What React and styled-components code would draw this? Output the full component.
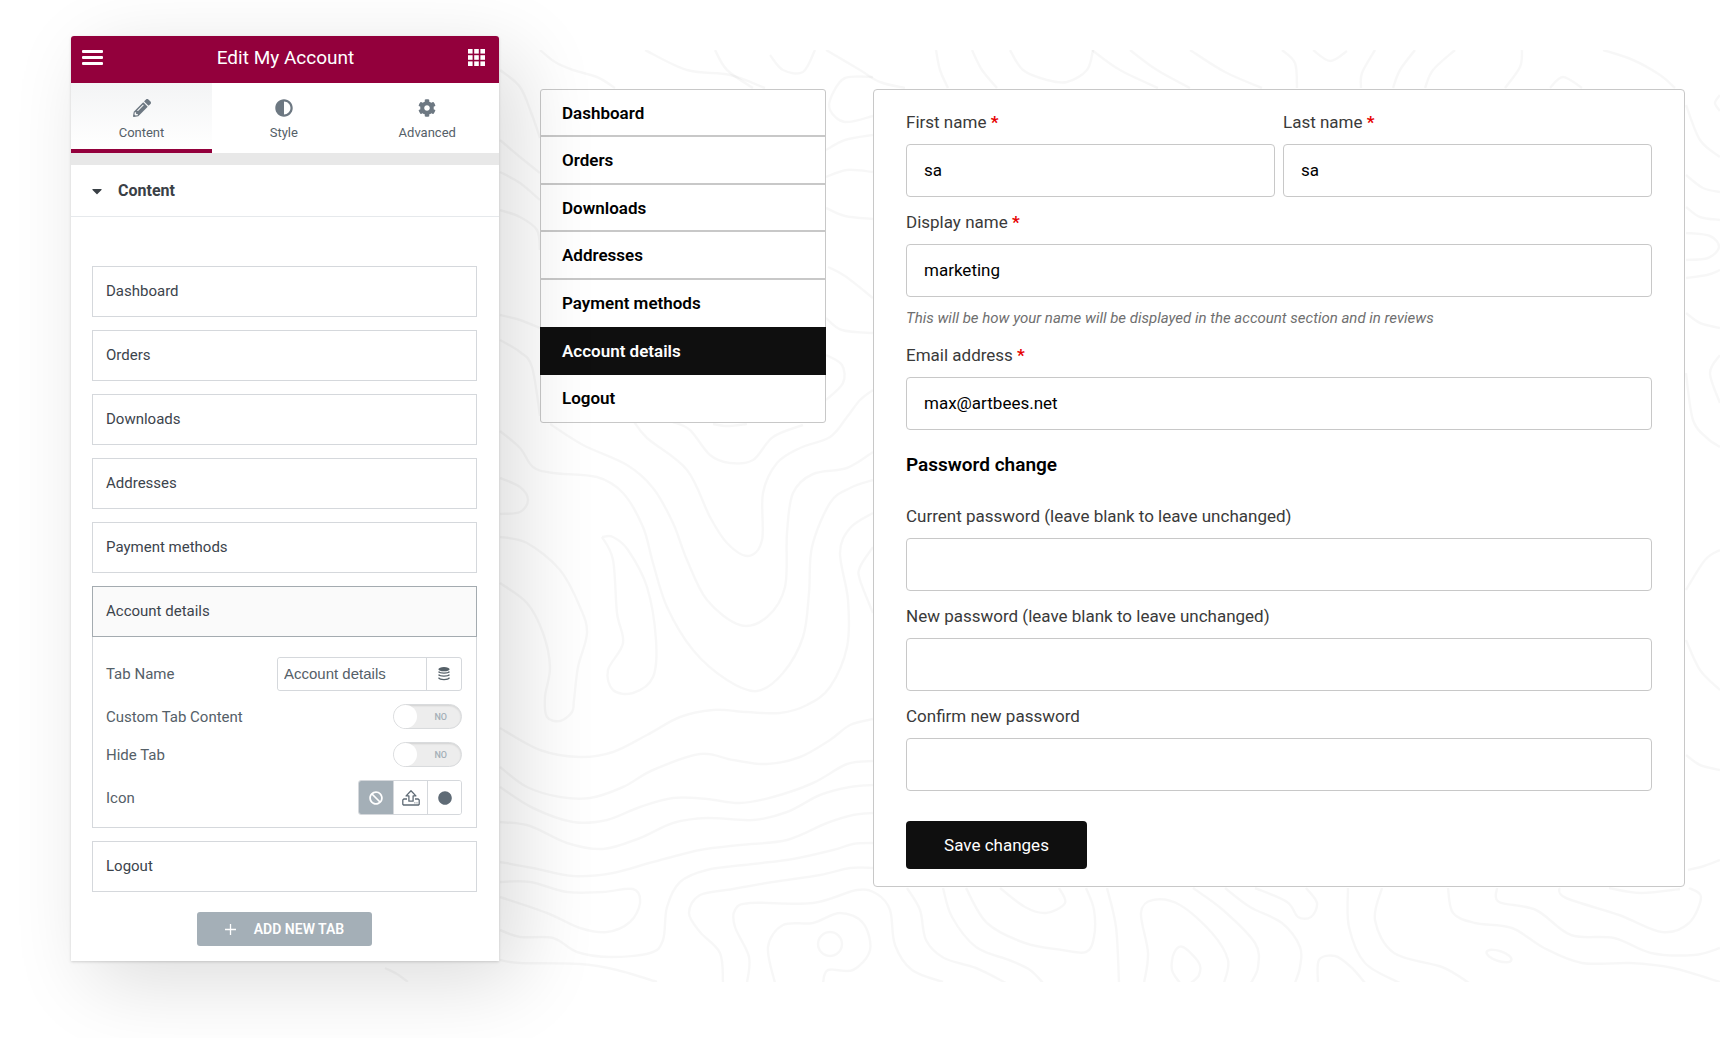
import React, { useState } from "react";
import styled, { createGlobalStyle } from "styled-components";
import {
  FaPencilAlt,
  FaAdjust,
  FaCog,
  FaCaretDown,
  FaBan,
  FaCircle,
} from "react-icons/fa";

const tabs = [
  { id: "content", label: "Content", icon: <FaPencilAlt /> },
  { id: "style", label: "Style", icon: <FaAdjust /> },
  { id: "advanced", label: "Advanced", icon: <FaCog /> },
];

const accountTabs = [
  "Dashboard",
  "Orders",
  "Downloads",
  "Addresses",
  "Payment methods",
  "Account details",
  "Logout",
];

// Contour lines of the backdrop, as flat x,y lists
const contours = [
  [385, 968, 397, 974, 408, 982],
  [550, 424, 583, 445, 627, 465, 653, 488, 673, 523, 687, 560, 707, 600, 740, 625, 767, 617, 785, 587, 787, 533, 793, 493, 813, 474, 847, 468, 873, 452],
  [500, 431, 520, 448, 533, 467, 553, 473, 597, 477, 623, 493, 643, 527, 653, 563, 667, 607, 693, 650, 727, 680, 757, 691, 783, 673, 803, 637, 809, 593, 812, 547, 830, 503, 850, 488, 873, 480],
  [633, 420, 647, 438, 687, 470, 710, 517, 727, 543, 748, 556, 762, 540, 763, 493, 777, 463, 800, 448, 830, 437, 847, 417, 860, 400, 873, 390],
  [673, 422, 690, 430, 710, 455, 730, 463, 753, 460, 773, 437, 803, 425],
  [713, 424, 727, 426, 747, 424],
  [602, 537, 613, 560, 617, 613, 623, 643, 608, 670, 613, 690, 633, 693, 653, 677, 656, 640, 647, 587, 628, 550, 613, 537, 602, 537],
  [500, 537, 527, 543, 560, 570, 580, 607, 587, 633, 578, 667, 574, 700, 572, 712, 560, 721, 547, 717, 545, 697, 550, 667, 543, 633, 527, 603, 500, 583],
  [500, 478, 520, 487, 528, 500, 520, 512, 500, 514],
  [873, 513, 850, 528, 840, 553, 848, 600, 847, 647, 830, 687, 807, 705, 780, 713, 747, 712, 713, 710, 680, 717, 647, 735, 613, 752, 580, 757, 540, 750, 500, 728],
  [873, 547, 860, 567, 860, 580, 873, 613],
  [500, 767, 527, 787, 560, 797, 590, 798, 623, 787, 653, 770, 700, 754, 733, 760, 767, 764, 800, 757, 830, 740, 850, 725, 873, 719],
  [500, 787, 533, 808, 573, 822, 607, 820, 640, 807, 673, 798, 707, 799, 740, 803, 773, 797, 813, 783, 847, 764, 873, 761],
  [500, 822, 530, 826, 567, 843, 603, 849, 640, 838, 673, 823, 707, 818, 753, 820, 787, 812, 820, 795, 850, 787, 873, 785],
  [500, 862, 533, 868, 573, 876, 613, 873, 653, 862, 700, 850, 740, 845, 787, 840, 827, 823, 853, 815, 873, 813],
  [500, 882, 530, 882, 567, 892, 603, 892, 633, 889, 640, 903, 630, 922, 607, 932, 580, 928, 547, 913, 500, 897],
  [500, 930, 520, 937, 553, 938, 577, 952, 610, 957, 650, 953, 663, 940, 667, 907, 680, 882, 707, 870, 753, 864, 793, 859, 833, 850, 853, 844, 873, 843],
  [500, 960, 520, 963, 580, 964, 617, 970, 657, 982],
  [723, 983, 720, 953, 700, 932, 689, 913, 700, 895, 733, 889, 773, 882, 820, 875, 850, 868, 873, 868],
  [747, 983, 749, 957, 735, 927, 735, 910, 750, 903, 813, 903, 857, 890, 877, 894, 890, 910, 895, 945, 912, 970, 943, 982],
  [775, 983, 768, 947, 783, 925, 813, 923, 840, 913, 863, 923, 870, 950, 853, 970, 828, 970, 823, 983],
  [907, 888, 920, 910, 926, 940, 944, 958, 976, 968, 1006, 983],
  [943, 888, 952, 917, 976, 947, 1009, 960, 1030, 970, 1043, 983],
  [966, 888, 987, 923, 1025, 943, 1062, 950, 1086, 952, 1094, 937, 1094, 910, 1086, 888],
  [1000, 888, 1025, 907, 1046, 913, 1065, 903, 1059, 888],
  [1107, 888, 1116, 927, 1119, 983],
  [1144, 983, 1148, 953, 1141, 913, 1153, 900, 1180, 905, 1212, 933, 1228, 960, 1224, 983],
  [1180, 983, 1172, 970, 1174, 953, 1183, 947, 1199, 963, 1199, 975, 1191, 983],
  [1193, 888, 1223, 910, 1255, 943, 1258, 967, 1251, 983],
  [1225, 888, 1250, 907, 1282, 923, 1300, 947, 1300, 967, 1295, 983],
  [1255, 888, 1287, 902, 1298, 917, 1311, 917, 1317, 903, 1306, 888],
  [1318, 983, 1319, 960, 1335, 956, 1351, 967, 1365, 983],
  [1348, 888, 1349, 927, 1365, 963, 1400, 983],
  [1382, 888, 1375, 920, 1394, 953, 1442, 967, 1469, 983],
  [1448, 888, 1453, 913, 1475, 923, 1512, 928, 1544, 948, 1582, 963, 1630, 963, 1673, 968, 1720, 982],
  [1497, 888, 1499, 902, 1536, 910, 1571, 935, 1614, 938, 1651, 953, 1694, 955, 1720, 948],
  [1559, 888, 1566, 898, 1619, 915, 1662, 932, 1689, 923, 1701, 897, 1689, 888],
  [1609, 888, 1641, 893, 1680, 889],
  [1688, 870, 1704, 866, 1720, 860],
  [1603, 50, 1633, 60, 1660, 75, 1675, 88],
  [1686, 105, 1700, 140, 1720, 157],
  [1686, 175, 1703, 188, 1720, 192],
  [1686, 207, 1700, 217, 1720, 220],
  [1686, 233, 1710, 236, 1719, 247, 1708, 258, 1686, 260],
  [1686, 278, 1707, 275, 1720, 270],
  [1686, 313, 1700, 323, 1720, 328],
  [1720, 355, 1710, 373, 1720, 403],
  [1686, 373, 1693, 420, 1707, 438, 1720, 447],
  [1686, 640, 1700, 670, 1720, 690],
  [1686, 590, 1705, 560, 1720, 550],
  [1686, 755, 1700, 765, 1720, 770],
  [1720, 95, 1715, 103, 1720, 111],
  [1282, 50, 1295, 63, 1297, 88],
  [1313, 50, 1330, 61, 1347, 51],
  [1375, 50, 1362, 73, 1361, 88],
  [1415, 50, 1400, 70, 1393, 88],
  [1455, 50, 1433, 70, 1425, 88],
  [1522, 50, 1520, 67, 1505, 88],
  [1550, 88, 1563, 77, 1582, 88],
  [826, 50, 860, 70, 880, 82, 905, 88],
  [936, 50, 940, 70, 948, 88],
  [972, 50, 982, 70, 997, 88],
  [1010, 50, 1023, 70, 1047, 80, 1067, 82, 1087, 70, 1093, 50],
  [1092, 50, 1120, 70, 1158, 88],
  [1130, 50, 1157, 70, 1190, 88],
  [1190, 50, 1225, 72, 1262, 88],
  [540, 50, 555, 62, 573, 70, 597, 77, 615, 88],
  [645, 50, 687, 70, 730, 75, 765, 88],
  [715, 50, 727, 70, 753, 88],
  [770, 55, 783, 70, 803, 72, 815, 50],
  [873, 77, 845, 78, 832, 95, 830, 110, 845, 122, 873, 116],
  [826, 150, 845, 140, 873, 135],
  [826, 177, 847, 170, 873, 172],
  [826, 208, 845, 216, 873, 219],
  [828, 267, 845, 276, 873, 298],
  [826, 318, 842, 330, 873, 333],
  [826, 355, 842, 365, 843, 383, 826, 400],
  [500, 70, 520, 87, 532, 115, 540, 138],
  [500, 140, 520, 157, 540, 173],
  [500, 172, 520, 183, 540, 200],
  [500, 210, 520, 217, 537, 230, 540, 250],
  [500, 315, 520, 320, 540, 328],
  [500, 340, 520, 352, 532, 367, 540, 416],
];

// Catmull-Rom spline through the points
const toPath = (flat) => {
  const pts = [];
  for (let i = 0; i < flat.length; i += 2) pts.push([flat[i], flat[i + 1]]);
  let d = `M${pts[0]}`;
  for (let i = 0; i < pts.length - 1; i++) {
    const p0 = pts[i - 1] || pts[i];
    const p1 = pts[i];
    const p2 = pts[i + 1];
    const p3 = pts[i + 2] || p2;
    const c1 = [p1[0] + (p2[0] - p0[0]) / 6, p1[1] + (p2[1] - p0[1]) / 6];
    const c2 = [p2[0] - (p3[0] - p1[0]) / 6, p2[1] - (p3[1] - p1[1]) / 6];
    d += `C${c1} ${c2} ${p2}`;
  }
  return d;
};

const Contours = () => (
  <Backdrop
    viewBox="0 0 1720 1038"
    preserveAspectRatio="xMaxYMin slice"
    aria-hidden="true"
  >
    <defs>
      <clipPath id="map-edge">
        <rect x="0" y="50" width="1720" height="932" />
      </clipPath>
    </defs>
    <g
      clipPath="url(#map-edge)"
      fill="none"
      stroke="#000"
      strokeOpacity="0.03"
      strokeWidth="2.5"
    >
      {contours.map((line, i) => (
        <path key={i} d={toPath(line)} />
      ))}
      <circle cx="830" cy="944" r="12" />
      <ellipse cx="1499" cy="956" rx="13" ry="5" transform="rotate(18 1499 956)" />
    </g>
  </Backdrop>
);

const MenuIcon = () => (
  <svg width="21" height="15" viewBox="0 0 21 15" fill="currentColor">
    <rect width="21" height="3" rx="1" />
    <rect y="6" width="21" height="3" rx="1" />
    <rect y="12" width="21" height="3" rx="1" />
  </svg>
);

const AppsIcon = () => (
  <svg width="17" height="17" viewBox="0 0 17 17" fill="currentColor">
    {[0, 6.2, 12.4].map((y) =>
      [0, 6.2, 12.4].map((x) => (
        <rect key={`${x}-${y}`} x={x} y={y} width="4.6" height="4.6" />
      ))
    )}
  </svg>
);

const StackIcon = () => (
  <svg width="12" height="14" viewBox="0 0 12 14" fill="currentColor">
    <ellipse cx="6" cy="2.2" rx="5.6" ry="2.1" />
    <g fill="none" stroke="currentColor" strokeWidth="1.3">
      <path d="M.5 4.6C2 6.500 10 6.500 11.500 4.600" />
      <path d="M.5 7.600C2 9.500 10 9.500 11.500 7.600" />
      <path d="M.5 10.600C2 13.200 10 13.200 11.500 10.600" />
    </g>
  </svg>
);

const UploadIcon = () => (
  <svg
    width="18"
    height="16"
    viewBox="0 0 18 16"
    fill="none"
    stroke="currentColor"
    strokeWidth="1.3"
    strokeLinejoin="round"
  >
    <path d="M6.9 11.2V5.9H4.1L9 .8l4.900 5.100h-2.800v5.300z" />
    <path d="M5 9H1.800L.8 10v4.200l.7.800h15l.7-.8V10l-1-1H13" />
    <path d="M12.500 12.800h.8M14.600 12.800h.8" />
  </svg>
);

const PlusIcon = () => (
  <svg width="11" height="11" viewBox="0 0 11 11" stroke="currentColor">
    <path d="M5.5 0v11M0 5.500h11" strokeWidth="1.3" />
  </svg>
);

const Field = ({ id, label, required, type = "text", value = "", hint }) => (
  <FieldGroup>
    <FieldLabel htmlFor={id}>
      {label} {required && <Required>*</Required>}
    </FieldLabel>
    <FieldInput id={id} type={type} defaultValue={value} />
    {hint && <Hint>{hint}</Hint>}
  </FieldGroup>
);

const Toggle = ({ id }) => {
  const [on, setOn] = useState(false);
  return (
    <Switch $on={on}>
      <SwitchInput
        id={id}
        type="checkbox"
        checked={on}
        onChange={() => setOn(!on)}
      />
      <SwitchKnob />
      <SwitchText>{on ? "YES" : "NO"}</SwitchText>
    </Switch>
  );
};

const TabSettings = () => {
  const [icon, setIcon] = useState("none");
  return (
    <Settings>
      <SettingRow>
        <SettingLabel htmlFor="tab-name">Tab Name</SettingLabel>
        <NameGroup>
          <NameInput id="tab-name" defaultValue="Account details" />
          <NameButton type="button" aria-label="Dynamic tags">
            <StackIcon />
          </NameButton>
        </NameGroup>
      </SettingRow>
      <SettingRow>
        <SettingLabel htmlFor="custom-content">Custom Tab Content</SettingLabel>
        <Toggle id="custom-content" />
      </SettingRow>
      <SettingRow>
        <SettingLabel htmlFor="hide-tab">Hide Tab</SettingLabel>
        <Toggle id="hide-tab" />
      </SettingRow>
      <SettingRow>
        <SettingLabel as="span">Icon</SettingLabel>
        <IconGroup>
          <IconChoice
            type="button"
            aria-label="None"
            $active={icon === "none"}
            onClick={() => setIcon("none")}
          >
            <FaBan />
          </IconChoice>
          <IconChoice
            type="button"
            aria-label="Upload SVG"
            $active={icon === "upload"}
            onClick={() => setIcon("upload")}
          >
            <UploadIcon />
          </IconChoice>
          <IconChoice
            type="button"
            aria-label="Icon library"
            $active={icon === "library"}
            onClick={() => setIcon("library")}
          >
            <FaCircle />
          </IconChoice>
        </IconGroup>
      </SettingRow>
    </Settings>
  );
};

const EditorPanel = () => {
  const [activeTab, setActiveTab] = useState("content");
  const [openItem, setOpenItem] = useState("Account details");

  return (
    <Panel>
      <PanelHeader>
        <HeaderButton type="button" aria-label="Menu">
          <MenuIcon />
        </HeaderButton>
        <PanelTitle>Edit My Account</PanelTitle>
        <HeaderButton type="button" aria-label="Widgets">
          <AppsIcon />
        </HeaderButton>
      </PanelHeader>

      <TabBar>
        {tabs.map((tab) => (
          <Tab
            key={tab.id}
            type="button"
            $active={tab.id === activeTab}
            onClick={() => setActiveTab(tab.id)}
          >
            {tab.icon}
            {tab.label}
          </Tab>
        ))}
      </TabBar>

      <SectionHeader type="button">
        <FaCaretDown />
        Content
      </SectionHeader>

      <SectionBody>
        <ItemList>
          {accountTabs.map((name) => (
            <li key={name}>
              <ItemButton
                type="button"
                $open={name === openItem}
                onClick={() => setOpenItem(name)}
              >
                {name}
              </ItemButton>
              {name === openItem && <TabSettings />}
            </li>
          ))}
        </ItemList>
        <AddButton type="button">
          <PlusIcon />
          ADD NEW TAB
        </AddButton>
      </SectionBody>
    </Panel>
  );
};

const AccountForm = () => (
  <FormCard onSubmit={(e) => e.preventDefault()}>
    <FieldStack>
      <NameRow>
        <Field id="first-name" label="First name" required value="sa" />
        <Field id="last-name" label="Last name" required value="sa" />
      </NameRow>
      <Field
        id="display-name"
        label="Display name"
        required
        value="marketing"
        hint="This will be how your name will be displayed in the account section and in reviews"
      />
      <Field
        id="email"
        label="Email address"
        required
        value="max@artbees.net"
      />
    </FieldStack>
    <FormHeading>Password change</FormHeading>
    <FieldStack>
      <Field
        id="current-password"
        type="password"
        label="Current password (leave blank to leave unchanged)"
      />
      <Field
        id="new-password"
        type="password"
        label="New password (leave blank to leave unchanged)"
      />
      <Field
        id="confirm-password"
        type="password"
        label="Confirm new password"
      />
    </FieldStack>
    <SaveButton type="submit">Save changes</SaveButton>
  </FormCard>
);

const App = () => (
  <>
    <GlobalStyle />
    <Page>
      <Contours />
      <Layout>
        <EditorPanel />
        <Preview>
          <AccountNav>
            {accountTabs.map((name) => (
              <NavItem key={name} href="#" $active={name === "Account details"}>
                {name}
              </NavItem>
            ))}
          </AccountNav>
          <AccountForm />
        </Preview>
      </Layout>
    </Page>
  </>
);

export default App;

// Styled Components
const GlobalStyle = createGlobalStyle`
  *, *::before, *::after {
    box-sizing: border-box;
  }

  body {
    margin: 0;
    background: #fff;
    font-family: Roboto, sans-serif;
    -webkit-font-smoothing: antialiased;
  }

  button, input {
    font-family: inherit;
    margin: 0;
  }

  button {
    cursor: pointer;
  }
`;

const Page = styled.div`
  display: grid;
  min-height: 100vh;
  overflow: hidden;
`;

const Backdrop = styled.svg`
  grid-area: 1 / 1;
  width: 100%;
  height: 100%;
`;

const Layout = styled.div`
  grid-area: 1 / 1;
  display: flex;
  align-items: flex-start;
  gap: 41px;
  padding: 36px 35px 60px 71px;
`;

const Panel = styled.aside`
  z-index: 1;
  flex: 0 0 428px;
  background: #fff;
  border-radius: 3px 3px 0 0;
  box-shadow: 0 1px 3px rgba(0, 0, 0, 0.16),
    20px 20px 80px rgba(0, 0, 0, 0.14);
`;

const PanelHeader = styled.header`
  display: flex;
  align-items: center;
  justify-content: space-between;
  height: 47px;
  padding: 0 14px 4px 11px;
  border-radius: 3px 3px 0 0;
  background: #93003c;
  color: #fff;
`;

const HeaderButton = styled.button`
  display: flex;
  padding: 0;
  border: none;
  background: none;
  color: inherit;
`;

const PanelTitle = styled.h1`
  margin: 0;
  font-size: 19px;
  line-height: 24px;
  font-weight: 400;
`;

const TabBar = styled.div`
  display: grid;
  grid-template-columns: 141px 1fr 1fr;
  border-bottom: 12px solid #e8e8e8;
`;

const Tab = styled.button`
  display: flex;
  flex-direction: column;
  align-items: center;
  gap: 7px;
  height: 70px;
  padding: 16px 0 0;
  border: none;
  border-bottom: 4px solid ${({ $active }) => ($active ? "#93003c" : "#fff")};
  background: ${({ $active }) =>
    $active ? "linear-gradient(#f3f4f5, #fff)" : "#fff"};
  color: #556068;
  font-size: 13px;
  line-height: 18px;

  svg {
    width: 18px;
    height: 18px;
    color: #6d7882;
  }
`;

const SectionHeader = styled.button`
  display: flex;
  align-items: center;
  gap: 13px;
  width: 100%;
  height: 52px;
  padding: 0 18px;
  border: none;
  border-bottom: 1px solid #e6e9ec;
  background: #fff;
  color: #3a4046;
  font-size: 16px;
  font-weight: 700;
`;

const SectionBody = styled.div`
  display: flex;
  flex-direction: column;
  align-items: center;
  gap: 20px;
  padding: 49px 22px 15px 21px;
`;

const ItemList = styled.ul`
  display: flex;
  flex-direction: column;
  gap: 13px;
  width: 100%;
  margin: 0;
  padding: 0;
  list-style: none;
`;

const ItemButton = styled.button`
  display: block;
  width: 100%;
  height: 51px;
  padding: 0 13px 1px;
  border: 1px solid ${({ $open }) => ($open ? "#a4abb0" : "#d5d8dc")};
  background: ${({ $open }) => ($open ? "#fafafa" : "#fff")};
  color: #3c444c;
  font-size: 15px;
  text-align: left;
`;

const Settings = styled.div`
  display: flex;
  flex-direction: column;
  gap: 13px;
  padding: 20px 14px 12px 13px;
  border: 1px solid #d5d8dc;
  border-top: none;
`;

const SettingRow = styled.div`
  display: flex;
  align-items: center;
  justify-content: space-between;
`;

const SettingLabel = styled.label`
  color: #556068;
  font-size: 15px;
  line-height: 18px;
`;

const NameGroup = styled.div`
  display: flex;
  width: 185px;
  height: 34px;
  border: 1px solid #d5d8dc;
  border-radius: 3px;
`;

const NameInput = styled.input`
  flex: 1;
  min-width: 0;
  padding: 0 6px 2px;
  border: none;
  border-radius: 3px;
  background: #fff;
  color: #556068;
  font-family: "Liberation Sans", sans-serif;
  font-size: 15px;
`;

const NameButton = styled.button`
  display: flex;
  align-items: center;
  justify-content: center;
  width: 35px;
  padding: 0;
  border: none;
  border-left: 1px solid #d5d8dc;
  background: none;
  color: #556068;
`;

const Switch = styled.span`
  position: relative;
  display: flex;
  align-items: center;
  justify-content: space-between;
  flex-direction: ${({ $on }) => ($on ? "row-reverse" : "row")};
  width: 69px;
  height: 25px;
  border: 1px solid #d9dbdd;
  border-radius: 13px;
  background: #ededed;
  box-shadow: inset 0 1px 2px rgba(0, 0, 0, 0.12);
`;

const SwitchInput = styled.input`
  position: absolute;
  inset: 0;
  width: 100%;
  height: 100%;
  opacity: 0;
  cursor: pointer;
`;

const SwitchKnob = styled.span`
  width: 23px;
  height: 23px;
  border-radius: 50%;
  background: #fff;
`;

const SwitchText = styled.span`
  padding: 0 14px;
  color: #a4afb7;
  font-size: 9px;
  font-weight: 500;
`;

const IconGroup = styled.div`
  display: flex;
  height: 35px;
  border: 1px solid #d5d8dc;
  border-radius: 3px;
  overflow: hidden;
`;

const IconChoice = styled.button`
  display: flex;
  align-items: center;
  justify-content: center;
  width: 34px;
  padding: 0;
  border: none;
  background: ${({ $active }) => ($active ? "#a4afb7" : "#fff")};
  color: ${({ $active }) => ($active ? "#fff" : "#5f6b76")};
  font-size: 14px;

  & + & {
    border-left: 1px solid #d5d8dc;
  }
`;

const AddButton = styled.button`
  display: flex;
  align-items: center;
  justify-content: center;
  gap: 18px;
  width: 175px;
  height: 34px;
  padding: 0;
  border: none;
  border-radius: 3px;
  background: #a4afb7;
  color: #fff;
  font-size: 14px;
  font-weight: 600;
`;

const Preview = styled.main`
  display: flex;
  flex: 1;
  align-items: flex-start;
  gap: 47px;
  min-width: 0;
  padding-top: 53px;
`;

const AccountNav = styled.nav`
  display: grid;
  grid-auto-rows: 1fr;
  flex: 0 0 286px;
  min-height: 334px;
  border: 1px solid #c8c8c8;
  border-radius: 3px;
  background: #fff;
`;

const NavItem = styled.a`
  display: flex;
  align-items: center;
  margin: 0 ${({ $active }) => ($active ? "-1px" : "0")};
  padding: 0 ${({ $active }) => ($active ? "22px" : "21px")};
  background: ${({ $active }) => ($active ? "#0f0f0f" : "none")};
  color: ${({ $active }) => ($active ? "#fff" : "#000")};
  font-size: 17px;
  font-weight: 600;
  text-decoration: none;

  &:nth-child(-n + 4) {
    border-bottom: 2px solid #c8c8c8;
  }
`;

const FormCard = styled.form`
  flex: 1;
  min-width: 0;
  padding: 20px 32px 17px;
  border: 1px solid #c8c8c8;
  border-radius: 4px;
  background: #fff;
`;

const FieldStack = styled.div`
  display: flex;
  flex-direction: column;
  gap: 13px;
`;

const NameRow = styled.div`
  display: grid;
  grid-template-columns: 1fr 1fr;
  gap: 8px;
`;

const FieldGroup = styled.div`
  display: flex;
  flex-direction: column;
`;

const FieldLabel = styled.label`
  padding-bottom: 9px;
  color: #3a3a3a;
  font-size: 17px;
  line-height: 25px;
`;

const Required = styled.span`
  color: #e60000;
  font-weight: 700;
`;

const FieldInput = styled.input`
  width: 100%;
  height: 53px;
  padding: 0 17px 1px;
  border: 1px solid #c8c8c8;
  border-radius: 4px;
  background: #fff;
  color: #000;
  font-size: 17px;
`;

const Hint = styled.em`
  margin: 10px 0 1px;
  color: #6f6f6f;
  font-size: 15px;
  line-height: 22px;
`;

const FormHeading = styled.h2`
  margin: 22px 0 26px;
  color: #000;
  font-size: 19px;
  line-height: 26px;
  font-weight: 600;
`;

const SaveButton = styled.button`
  width: 181px;
  height: 48px;
  margin-top: 30px;
  padding: 0;
  border: none;
  border-radius: 4px;
  background: #0f0f0f;
  color: #fff;
  font-size: 17px;
`;
